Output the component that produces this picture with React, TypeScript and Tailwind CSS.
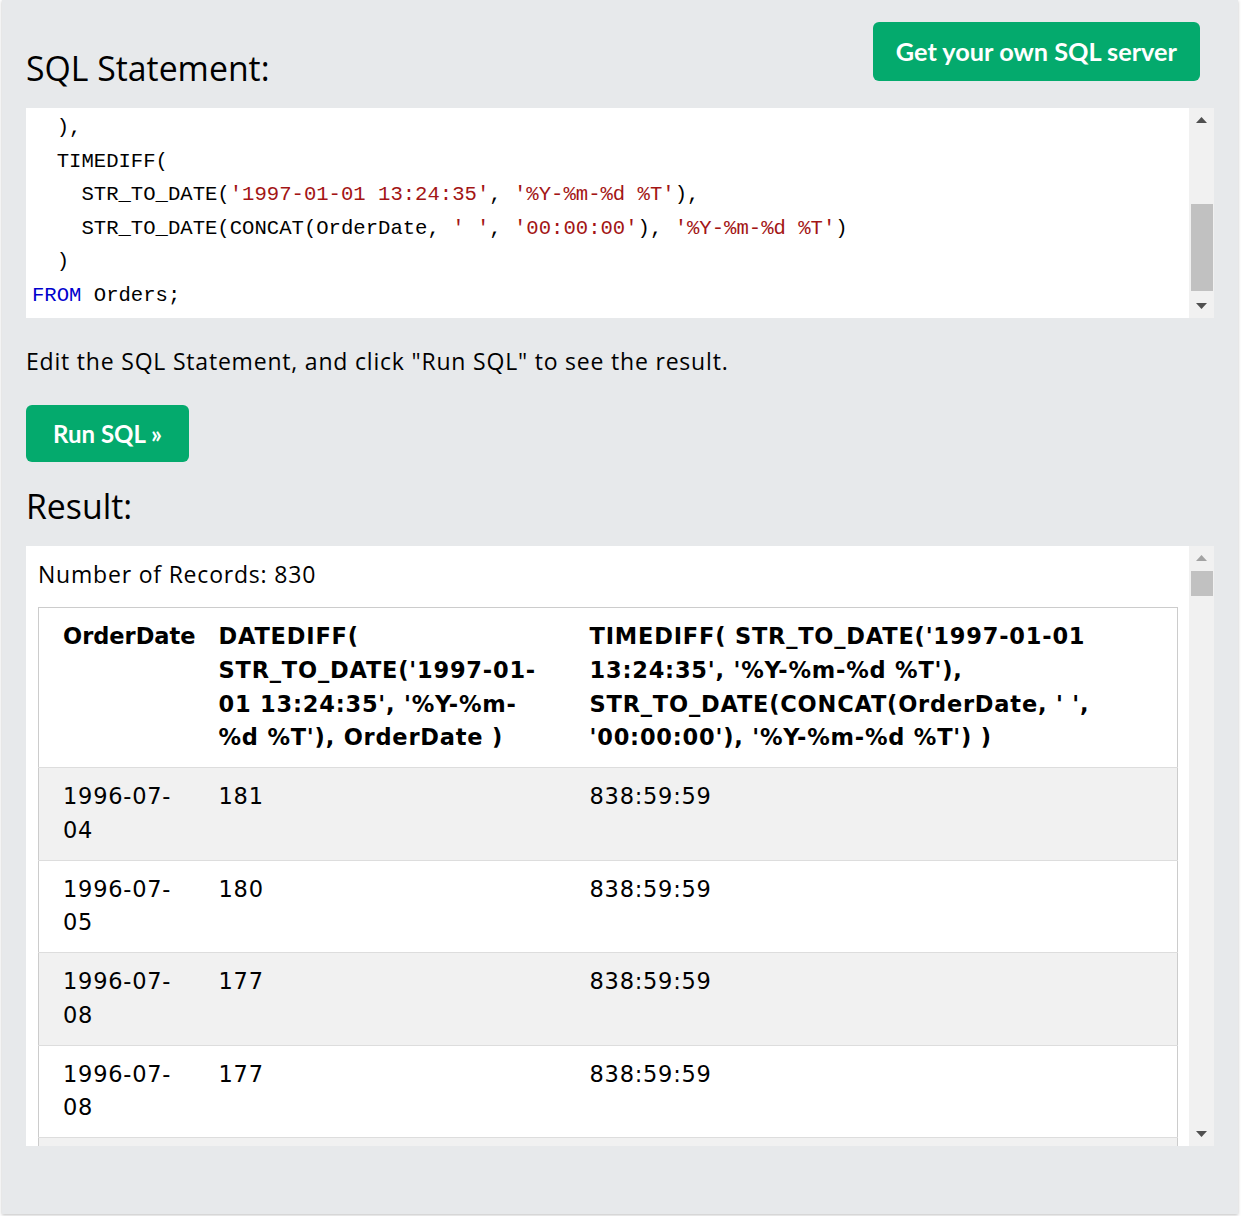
import React from 'react';

const ui = { fontFamily: '"Open Sans", "Noto Sans", sans-serif' };
const btn = { fontFamily: 'Lato, "Open Sans", sans-serif' };
const mono = { fontFamily: '"Liberation Mono", "DejaVu Sans Mono", monospace' };
const verdana = { fontFamily: '"DejaVu Sans", Verdana, sans-serif' };

const Str = ({ children }: { children: React.ReactNode }) => <span className="text-[#a31515]">{children}</span>;

function Scrollbar({ thumbTop, thumbHeight, upDisabled }: { thumbTop: number; thumbHeight: number; upDisabled?: boolean }) {
  return (
    <div className="w-[25px] shrink-0 bg-[#f1f1f1] flex flex-col items-center relative">
      <div className="pt-[9px]">
        <svg width="11" height="6" viewBox="0 0 11 6">
          <path d="M0 6 L5.5 0 L11 6 Z" fill={upDisabled ? '#a3a3a3' : '#505050'} />
        </svg>
      </div>
      <div
        className="absolute left-[2px] right-[1px] bg-[#c1c1c1]"
        style={{ top: thumbTop, height: thumbHeight }}
      />
      <div className="mt-auto pb-[9px]">
        <svg width="11" height="6" viewBox="0 0 11 6">
          <path d="M0 0 L11 0 L5.5 6 Z" fill="#505050" />
        </svg>
      </div>
    </div>
  );
}

const rows = [
  { date: '1996-07-04', days: '181', time: '838:59:59' },
  { date: '1996-07-05', days: '180', time: '838:59:59' },
  { date: '1996-07-08', days: '177', time: '838:59:59' },
  { date: '1996-07-08', days: '177', time: '838:59:59' },
  { date: '1996-07-09', days: '176', time: '838:59:59' },
];

export default function App() {
  return (
    <div className="min-h-screen bg-white">
      <div className="ml-[2px] w-[1236px] h-[1214px] bg-[#e7e9eb] shadow-[0_1px_3px_rgba(0,0,0,0.25)] px-[24px] pt-[22px]">
        {/* header */}
        <div className="flex justify-between h-[86px]">
          <h2 style={ui} className="self-end text-[33.8px] leading-[40px] text-black mb-[20px]">SQL Statement:</h2>
          <button
            style={btn}
            className="mr-[14px] h-[59px] px-[23px] rounded-[6px] bg-[#04aa6d] text-white text-[25.3px] font-bold"
          >
            Get your own SQL server
          </button>
        </div>

        {/* code editor */}
        <div className="h-[210px] bg-white flex">
          <div style={mono} className="flex-1 overflow-hidden pl-[6px] pt-[3px] text-[20.6px] leading-[33.6px] text-black whitespace-pre">
            <div>{'  ),'}</div>
            <div>{'  TIMEDIFF('}</div>
            <div>
              {'    STR_TO_DATE('}<Str>'1997-01-01 13:24:35'</Str>{', '}<Str>'%Y-%m-%d %T'</Str>{'),'}
            </div>
            <div>
              {'    STR_TO_DATE(CONCAT(OrderDate, '}<Str>' '</Str>{', '}<Str>'00:00:00'</Str>{'), '}<Str>'%Y-%m-%d %T'</Str>{')'}
            </div>
            <div>{'  )'}</div>
            <div>
              <span className="text-[#0000cd]">FROM</span>{' Orders;'}
            </div>
          </div>
          <Scrollbar thumbTop={96} thumbHeight={87} />
        </div>

        <p style={ui} className="mt-[26px] text-[23px] leading-[34px] tracking-[0.8px] text-black">
          Edit the SQL Statement, and click "Run SQL" to see the result.
        </p>

        <button
          style={btn}
          className="mt-[27px] h-[57px] w-[163px] rounded-[6px] bg-[#04aa6d] text-white text-[24px] font-bold"
        >
          Run SQL »
        </button>

        <h2 style={ui} className="mt-[24px] text-[33.8px] leading-[40px] text-black">Result:</h2>

        {/* result */}
        <div className="mt-[20px] h-[600px] bg-white flex">
          <div className="flex-1 overflow-hidden pl-[12px] pr-[12px]">
            <div style={ui} className="pt-[11px] text-[23px] leading-[34px] tracking-[0.8px] text-black">Number of Records: 830</div>
            <table style={verdana} className="mt-[16px] w-[1140px] border border-[#cccccc] border-collapse text-[22.5px] leading-[33.75px] text-black table-fixed">
              <colgroup>
                <col className="w-[168px]" />
                <col className="w-[371px]" />
                <col />
              </colgroup>
              <thead>
                <tr className="bg-white">
                  <th className="text-left align-top font-bold pl-[24px] pr-[12px] pt-[12px] pb-[12px]">OrderDate</th>
                  <th className="text-left align-top font-bold tracking-[0.8px] pl-[12px] pr-[26px] pt-[12px] pb-[12px]">
                    DATEDIFF( STR_TO_DATE('1997-01-01 13:24:35', '%Y-%m-%d %T'), OrderDate )
                  </th>
                  <th className="text-left align-top font-bold tracking-[0.8px] px-[12px] pt-[12px] pb-[12px]">
                    TIMEDIFF( STR_TO_DATE('1997-01-01 13:24:35', '%Y-%m-%d %T'), STR_TO_DATE(CONCAT(OrderDate, ' ', '00:00:00'), '%Y-%m-%d %T') )
                  </th>
                </tr>
              </thead>
              <tbody className="tracking-[0.75px]">
                {rows.map((r, i) => (
                  <tr key={i} className={`border-t border-[#dddddd] ${i % 2 === 0 ? 'bg-[#f1f1f1]' : 'bg-white'}`}>
                    <td className="align-top pl-[24px] pr-[12px] py-[12px]">{r.date}</td>
                    <td className="align-top px-[12px] py-[12px]">{r.days}</td>
                    <td className="align-top px-[12px] py-[12px]">{r.time}</td>
                  </tr>
                ))}
              </tbody>
            </table>
          </div>
          <Scrollbar thumbTop={25} thumbHeight={25} upDisabled />
        </div>
      </div>
    </div>
  );
}
